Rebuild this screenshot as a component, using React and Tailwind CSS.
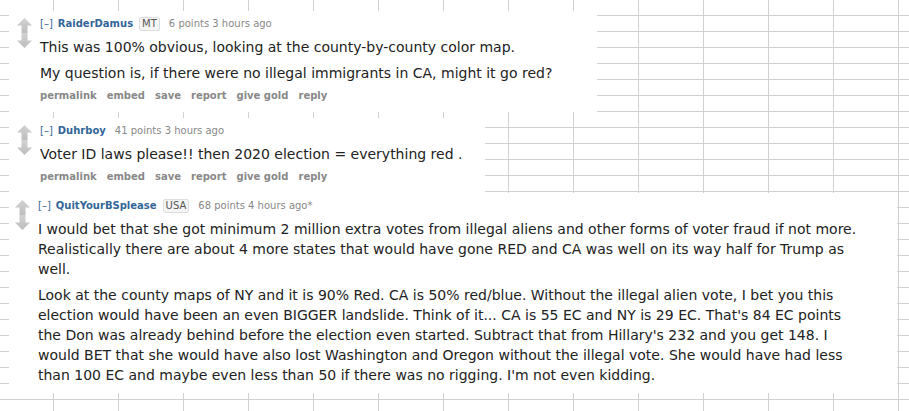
import React from "react";

const comments = [
  {
    id: 1,
    author: "RaiderDamus",
    flair: "MT",
    points: "6 points 3 hours ago",
    body: [
      "This was 100% obvious, looking at the county-by-county color map.",
      "My question is, if there were no illegal immigrants in CA, might it go red?",
    ],
    buttons: true,
    box: "w-[588px]",
    indent: "ml-[8px]",
  },
  {
    id: 2,
    author: "Duhrboy",
    flair: null,
    points: "41 points 3 hours ago",
    body: ["Voter ID laws please!! then 2020 election = everything red ."],
    buttons: true,
    box: "w-[476px] mt-[6px]",
    indent: "ml-[8px]",
  },
  {
    id: 3,
    author: "QuitYourBSplease",
    flair: "USA",
    points: "68 points 4 hours ago*",
    body: [
      "I would bet that she got minimum 2 million extra votes from illegal aliens and other forms of voter fraud if not more. Realistically there are about 4 more states that would have gone RED and CA was well on its way half for Trump as well.",
      "Look at the county maps of NY and it is 90% Red. CA is 50% red/blue. Without the illegal alien vote, I bet you this election would have been an even BIGGER landslide. Think of it... CA is 55 EC and NY is 29 EC. That's 84 EC points the Don was already behind before the election even started. Subtract that from Hillary's 232 and you get 148. I would BET that she would have also lost Washington and Oregon without the illegal vote. She would have had less than 100 EC and maybe even less than 50 if there was no rigging. I'm not even kidding.",
    ],
    buttons: false,
    box: "w-[888px] pb-[1px]",
    indent: "ml-[6px]",
  },
];

const actions = ["permalink", "embed", "save", "report", "give gold", "reply"];

function Arrows() {
  return (
    <svg width="15" height="30" viewBox="0 0 15 30" className="shrink-0">
      <defs>
        <linearGradient id="arr" x1="0" y1="0" x2="0" y2="1">
          <stop offset="0" stopColor="#d2d2d2" />
          <stop offset="1" stopColor="#bdbdbd" />
        </linearGradient>
      </defs>
      <path d="M7.5 0 L15 7.5 L10.5 7.5 L10.5 15 L4.5 15 L4.5 7.5 L0 7.5 Z" fill="url(#arr)" />
      <path d="M4.5 15 L10.5 15 L10.5 22.5 L15 22.5 L7.5 30 L0 22.5 L4.5 22.5 Z" fill="url(#arr)" />
    </svg>
  );
}

function Comment({ c }) {
  return (
    <div className={`bg-white flex pt-[7px] pb-[8px] ${c.box}`}>
      <div className={`${c.indent} mr-[8px] w-[15px]`}>
        <Arrows />
      </div>
      <div className="flex flex-col">
        {/* tagline */}
        <div className="flex items-center h-[12px] text-[10px] leading-[12px] text-[#888]">
          <span className="text-[#369] mr-[5px]">[–]</span>
          <span className="text-[#369] font-bold">{c.author}</span>
          {c.flair && (
            <span className="ml-[6px] px-[2px] border border-[#ddd] bg-[#f5f5f5] text-[#545454] rounded-[2px] leading-[12px]">
              {c.flair}
            </span>
          )}
          <span className="ml-[9px]">{c.points}</span>
        </div>
        {/* body */}
        <div className="mt-[7px] max-w-[827px] flex flex-col gap-[6px] text-[14px] leading-[20px] text-[#222]">
          {c.body.map((p, i) => (
            <p key={i}>{p}</p>
          ))}
        </div>
        {c.buttons && (
          <div className="mt-[7px] mb-[2px] flex gap-[10px] text-[10px] leading-[12px] font-bold text-[#888]">
            {actions.map((a) => (
              <span key={a}>{a}</span>
            ))}
          </div>
        )}
      </div>
    </div>
  );
}

export default function App() {
  return (
    <div
      className="h-[411px] w-full overflow-hidden bg-white bg-[linear-gradient(to_right,#d1d1d1_1px,transparent_1px),linear-gradient(to_bottom,#d1d1d1_1px,transparent_1px)] bg-size-[65px_16px] bg-position-[53px_15px] pt-[11px] pl-[9px]"
      style={{ fontFamily: '"DejaVu Sans", Verdana, sans-serif' }}
    >
      {comments.map((c) => (
        <Comment key={c.id} c={c} />
      ))}
    </div>
  );
}
